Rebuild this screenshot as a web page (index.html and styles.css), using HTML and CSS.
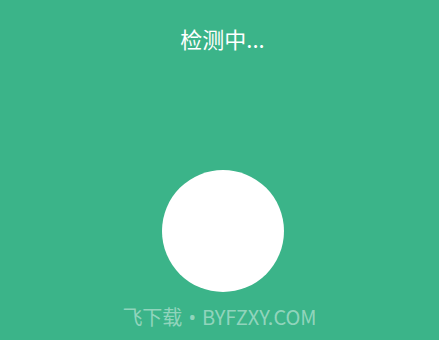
FILE: index.html
```html
<!DOCTYPE html>
<html lang="zh">
<head>
<meta charset="utf-8">
<link rel="stylesheet" href="styles.css">
</head>
<body>
<main class="screen">
  <h1 class="title">检测中...</h1>
  <div class="circle"></div>
  <div class="watermark">飞下载<span class="dot">•</span>BYFZXY.COM</div>
</main>
</body>
</html>
```
FILE: styles.css
```css
html, body {
  margin: 0;
  padding: 0;
  width: 439px;
  height: 340px;
  overflow: hidden;
  background: #3bb489;
}
.screen {
  position: relative;
  box-sizing: border-box;
  width: 439px;
  height: 340px;
  padding-left: 6px;
  display: flex;
  flex-direction: column;
  align-items: center;
  font-family: "Noto Sans CJK SC", "Noto Sans", sans-serif;
}
.title {
  margin: 22px 0 0 0;
  font-size: 22px;
  font-weight: 400;
  line-height: 32px;
  color: #ffffff;
}
.circle {
  margin-top: 116px;
  width: 122px;
  height: 122px;
  border-radius: 50%;
  background: #ffffff;
}
.watermark {
  position: absolute;
  left: 0;
  right: 0;
  top: 303px;
  text-align: center;
  font-size: 20px;
  line-height: 28px;
  color: rgba(255, 255, 255, 0.45);
}
.dot {
  font-family: "Noto Sans", sans-serif;
  margin: 0 6px;
}
```
